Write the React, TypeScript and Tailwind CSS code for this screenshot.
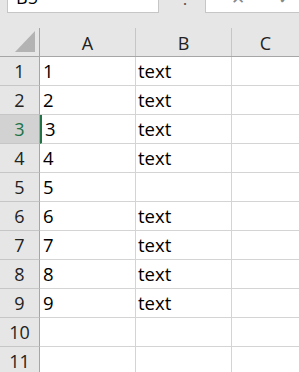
const rows: { a: string; b: string }[] = [
  { a: "1", b: "text" },
  { a: "2", b: "text" },
  { a: "3", b: "text" },
  { a: "4", b: "text" },
  { a: "5", b: "" },
  { a: "6", b: "text" },
  { a: "7", b: "text" },
  { a: "8", b: "text" },
  { a: "9", b: "text" },
  { a: "", b: "" },
  { a: "", b: "" },
];

const font = { fontFamily: '"Open Sans", "Noto Sans", sans-serif' };

export default function App() {
  return (
    <div className="w-[299px] h-[372px] overflow-hidden bg-[#e6e6e6] text-black" style={font}>
      {/* Formula bar, cut off at top */}
      <div className="h-[28px] flex items-start">
        <div className="ml-[7px] w-[152px] h-[13px] bg-white border border-t-0 border-[#c6c6c6] overflow-hidden relative">
          <span className="absolute left-[8px] -top-[13px] text-[18px] leading-[20px]">B5</span>
        </div>
        <div className="w-[46px] h-[13px] overflow-hidden relative">
          <span className="absolute left-[18px] -top-[14px] text-[16px] text-[#555]">⋮</span>
        </div>
        <div className="flex-1 h-[13px] bg-white border-l border-b border-[#c6c6c6] overflow-hidden relative">
          <span className="absolute left-[25px] -top-[15px] text-[17px] text-[#888]">✕</span>
          <span className="absolute left-[72px] -top-[15px] text-[17px] text-[#888]">✓</span>
        </div>
      </div>

      {/* Column headers */}
      <div className="flex h-[29px] border-b border-[#a6a6a6]">
        <div className="w-[40px] border-r border-[#a6a6a6] flex items-end justify-end pr-[4px] pb-[4px]">
          <svg width="20" height="21" viewBox="0 0 20 21">
            <polygon points="20,0 20,21 0,21" fill="#b3b3b3" />
          </svg>
        </div>
        {["A", "B"].map((c) => (
          <div key={c} className="w-[96px] border-r border-[#c6c6c6] flex items-center justify-center text-[18px] text-[#222] pt-[2px]">
            {c}
          </div>
        ))}
        <div className="flex-1 flex items-center justify-center text-[18px] text-[#222] pt-[2px]">C</div>
      </div>

      {/* Rows */}
      {rows.map((r, i) => {
        const sel = i === 2;
        return (
          <div key={i} className="flex h-[29px]">
            <div
              className={`w-[40px] border-r border-b flex items-center justify-center text-[18px] ${
                sel ? "bg-[#d2d2d2] text-[#217346] border-r-[#a6a6a6] border-b-[#c6c6c6]" : "text-[#222] border-r-[#a6a6a6] border-b-[#c6c6c6]"
              }`}
            >
              {i + 1}
            </div>
            <div className={`w-[96px] bg-white border-r border-b border-[#d4d4d4] flex items-center pl-[3px] text-[18.5px] ${sel ? "border-l-2 border-l-[#217346] pl-[1px]" : ""}`}>
              {r.a}
            </div>
            <div className="w-[96px] bg-white border-r border-b border-[#d4d4d4] flex items-center pl-[2px] text-[18.5px]">
              {r.b}
            </div>
            <div className="flex-1 bg-white border-b border-[#d4d4d4]" />
          </div>
        );
      })}
    </div>
  );
}
